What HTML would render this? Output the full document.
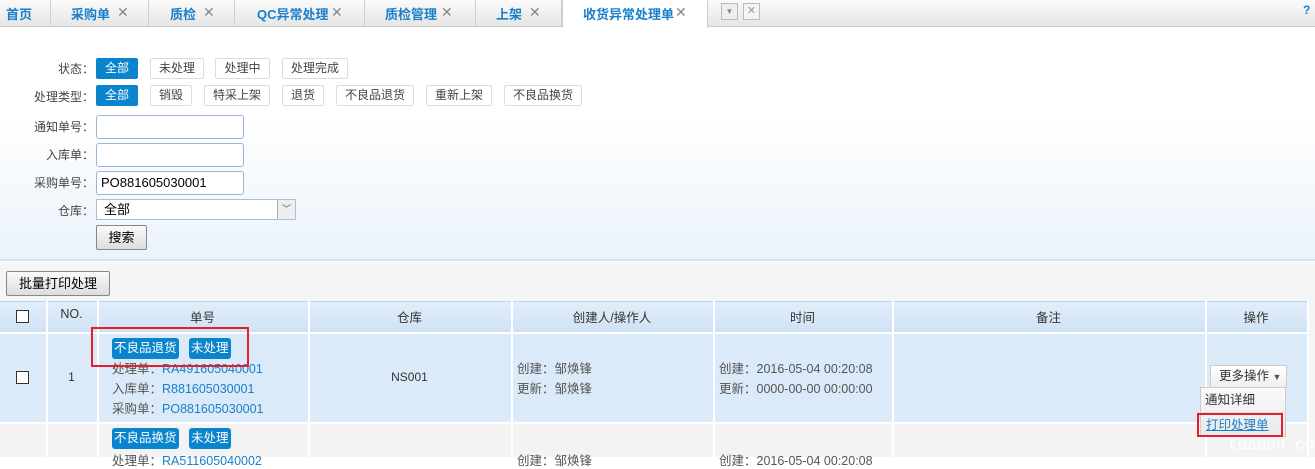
<!DOCTYPE html>
<html><head><meta charset="utf-8"><style>
*{box-sizing:border-box;margin:0;padding:0}
body{width:1315px;height:457px;overflow:hidden;font-family:"Liberation Sans","Noto Sans CJK SC",sans-serif;font-size:12px;color:#333;background:#fff;position:relative}
.a{position:absolute}
.tabs{left:0;top:0;width:1315px;height:27px;background:linear-gradient(#fafafa,#e6e6e6);border-bottom:1px solid #ccc}
.tab{position:absolute;top:0;height:27px;border-right:1px solid #d0d0d0}
.tt{position:absolute;top:4px;color:#1a7fc9;font-weight:bold;font-size:13px}
.tx{position:absolute;top:4px;color:#888;font-size:14px}
.filter{left:0;top:27px;width:1315px;height:233px;background:linear-gradient(#fff 40%,#eaf2fb);border-bottom:2px solid #d6e4f2}
.lbl{position:absolute;text-align:right;color:#444;font-size:12px}
.btn{position:absolute;height:21px;border:1px solid #ddd;border-radius:2px;background:#fff;line-height:19px;text-align:center;color:#444;font-size:12px}
.btn.on{background:#0a84cc;border-color:#0a84cc;color:#fff}
.inp{position:absolute;left:96px;width:148px;height:24px;border:1px solid #9ab5d6;border-radius:3px;background:#fff;font-size:13px;padding-left:4px;line-height:22px;color:#000}
.col{position:absolute;top:301px;height:156px;border-left:2px solid #fff}
.tag{position:absolute;height:21px;background:#0a84cc;color:#fff;border-radius:3px;font-size:12.5px;line-height:21px;padding:0 2px}
.ln{position:absolute;font-size:12.5px;color:#555}
.ln b{font-weight:normal;color:#1a7fc9}
.cb{position:absolute;width:13px;height:13px;border:1px solid #333;background:#fff}
.th{position:absolute;top:307px;text-align:center;font-size:12.5px}
</style></head><body>
<div class="a tabs">
 <div class="tab" style="left:0;width:51px"></div>
 <div class="tab" style="left:51px;width:98px"></div>
 <div class="tab" style="left:149px;width:86px"></div>
 <div class="tab" style="left:235px;width:130px"></div>
 <div class="tab" style="left:365px;width:111px"></div>
 <div class="tab" style="left:476px;width:86px"></div>
 <div class="tab" style="left:562px;width:146px;background:#fff;height:28px;border-left:1px solid #ccc"></div>
 <div class="tt" style="left:6px">首页</div>
 <div class="tt" style="left:71px">采购单</div><div class="tx" style="left:117px">✕</div>
 <div class="tt" style="left:170px">质检</div><div class="tx" style="left:203px">✕</div>
 <div class="tt" style="left:257px">QC异常处理</div><div class="tx" style="left:331px">✕</div>
 <div class="tt" style="left:385px">质检管理</div><div class="tx" style="left:441px">✕</div>
 <div class="tt" style="left:496px">上架</div><div class="tx" style="left:529px">✕</div>
 <div class="tt" style="left:583px">收货异常处理单</div><div class="tx" style="left:675px">✕</div>
 <div class="a" style="left:721px;top:3px;width:17px;height:17px;border:1px solid #bbb;background:#eee;color:#888;font-size:8px;text-align:center;line-height:16px">▼</div>
 <div class="a" style="left:743px;top:3px;width:17px;height:17px;border:1px solid #bbb;background:#f4f4f4;color:#999;font-size:11px;text-align:center;line-height:15px">✕</div>
</div>
<div class="a" style="left:1303px;top:3px;color:#1a7fc9;font-weight:bold;font-size:12px">?</div>
<div class="a filter" style="top:28px"></div>
<div class="lbl" style="left:40px;top:60px;width:54px">状态：</div>
<div class="btn on" style="left:96px;top:58px;width:42px">全部</div>
<div class="btn" style="left:150px;top:58px;width:54px">未处理</div>
<div class="btn" style="left:215px;top:58px;width:55px">处理中</div>
<div class="btn" style="left:282px;top:58px;width:66px">处理完成</div>
<div class="lbl" style="left:20px;top:88px;width:74px">处理类型：</div>
<div class="btn on" style="left:96px;top:85px;width:42px">全部</div>
<div class="btn" style="left:150px;top:85px;width:42px">销毁</div>
<div class="btn" style="left:204px;top:85px;width:66px">特采上架</div>
<div class="btn" style="left:282px;top:85px;width:42px">退货</div>
<div class="btn" style="left:336px;top:85px;width:78px">不良品退货</div>
<div class="btn" style="left:426px;top:85px;width:66px">重新上架</div>
<div class="btn" style="left:504px;top:85px;width:78px">不良品换货</div>
<div class="lbl" style="left:20px;top:118px;width:74px">通知单号：</div>
<div class="inp" style="top:115px"></div>
<div class="lbl" style="left:20px;top:146px;width:74px">入库单：</div>
<div class="inp" style="top:143px"></div>
<div class="lbl" style="left:20px;top:174px;width:74px">采购单号：</div>
<div class="inp" style="top:171px">PO881605030001</div>
<div class="lbl" style="left:20px;top:202px;width:74px">仓库：</div>
<div class="a" style="left:96px;top:199px;width:200px;height:21px;border:1px solid #a9bfd6;background:#fff;font-size:13px;padding-left:7px;line-height:20px;color:#000">全部<div class="a" style="right:0;top:0;width:18px;height:19px;background:#eee;border-left:1px solid #aaa;font-size:9px;text-align:center;line-height:19px;color:#555">﹀</div></div>
<div class="a" style="left:96px;top:225px;width:51px;height:25px;border:1px solid #888;border-radius:2px;background:linear-gradient(#fafafa,#ddd);font-size:13px;text-align:center;line-height:23px;color:#000">搜索</div>
<div class="a" style="left:0;top:262px;width:1315px;height:195px;background:#f5f5f5"></div>
<div class="a" style="left:6px;top:271px;width:104px;height:25px;border:1px solid #888;border-radius:2px;background:linear-gradient(#fafafa,#ddd);font-size:13px;text-align:center;line-height:23px;color:#000">批量打印处理</div>
<div class="a" style="left:0;top:301px;width:1307px;height:31px;background:linear-gradient(#e2eefa,#cfe2f4);border-top:1px solid #b9d6f2"></div>
<div class="a" style="left:0;top:332px;width:1307px;height:90px;background:#dbeaf8;border-top:2px solid #fff"></div>
<div class="a" style="left:0;top:422px;width:1307px;height:35px;background:#f3f3f3;border-top:2px solid #fff"></div>
<div class="col" style="left:46px"></div><div class="col" style="left:97px"></div><div class="col" style="left:308px"></div><div class="col" style="left:511px"></div><div class="col" style="left:713px"></div><div class="col" style="left:892px"></div><div class="col" style="left:1205px"></div><div class="col" style="left:1307px"></div>
<div class="cb" style="left:16px;top:310px"></div>
<div class="th" style="left:46px;width:51px">NO.</div>
<div class="th" style="left:97px;width:211px">单号</div>
<div class="th" style="left:308px;width:203px">仓库</div>
<div class="th" style="left:511px;width:202px">创建人/操作人</div>
<div class="th" style="left:713px;width:179px">时间</div>
<div class="th" style="left:892px;width:313px">备注</div>
<div class="th" style="left:1205px;width:102px">操作</div>
<div class="cb" style="left:16px;top:371px"></div>
<div class="a" style="left:46px;top:370px;width:51px;text-align:center">1</div>
<div class="tag" style="left:112px;top:338px">不良品退货</div>
<div class="tag" style="left:189px;top:338px">未处理</div>
<div class="ln" style="left:112px;top:358px">处理单：<b>RA491605040001</b></div>
<div class="ln" style="left:112px;top:378px">入库单：<b>R881605030001</b></div>
<div class="ln" style="left:112px;top:398px">采购单：<b>PO881605030001</b></div>
<div class="a" style="left:91px;top:327px;width:158px;height:40px;border:2px solid #e5202b"></div>
<div class="a" style="left:308px;top:370px;width:203px;text-align:center">NS001</div>
<div class="ln" style="left:517px;top:358px">创建：邹焕锋</div>
<div class="ln" style="left:517px;top:378px">更新：邹焕锋</div>
<div class="ln" style="left:719px;top:358px">创建：2016-05-04 00:20:08</div>
<div class="ln" style="left:719px;top:378px">更新：0000-00-00 00:00:00</div>
<div class="a" style="left:1210px;top:365px;width:77px;height:23px;border:1px solid #ccc;background:linear-gradient(#fff,#eee);font-size:12.5px;line-height:21px;padding-left:8px">更多操作 <span style="font-size:9px;color:#555">▼</span></div>
<div class="a" style="left:1200px;top:387px;width:86px;height:50px;border:1px solid #ccc;background:linear-gradient(#fafafa,#e8e8e8)"></div>
<div class="a" style="left:1200px;top:412px;width:86px;height:1px;background:#ddd"></div>
<div class="a" style="left:1205px;top:389px;font-size:12.5px">通知详细</div>
<div class="a" style="left:1206px;top:414px;font-size:12.5px;color:#1a7fc9;text-decoration:underline">打印处理单</div>
<div class="a" style="left:1197px;top:413px;width:86px;height:24px;border:2px solid #e5202b"></div>
<div class="a" style="left:1228px;top:436px;color:#fff;font-family:'Liberation Mono',monospace;font-size:16px">tuauuu.co</div>
<div class="tag" style="left:112px;top:428px">不良品换货</div>
<div class="tag" style="left:189px;top:428px">未处理</div>
<div class="ln" style="left:112px;top:450px">处理单：<b>RA511605040002</b></div>
<div class="ln" style="left:517px;top:450px">创建：邹焕锋</div>
<div class="ln" style="left:719px;top:450px">创建：2016-05-04 00:20:08</div>
</body></html>
